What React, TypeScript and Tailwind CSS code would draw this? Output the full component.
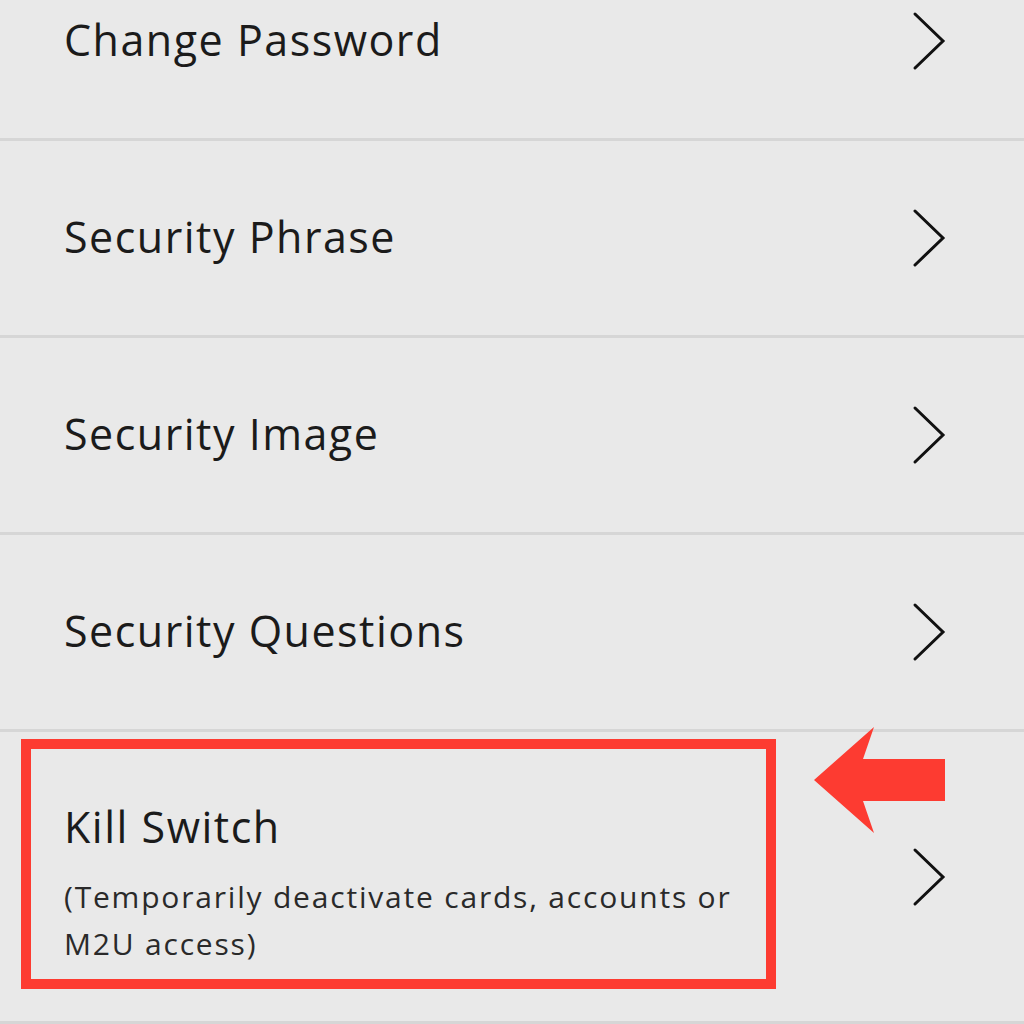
import React from "react";

const Chevron = () => (
  <svg width="34" height="60" viewBox="0 0 34 60" fill="none" className="shrink-0">
    <polyline
      points="3,3 31,30 3,57"
      stroke="#111111"
      strokeWidth="3"
      strokeLinecap="round"
      strokeLinejoin="miter"
    />
  </svg>
);

const Row = ({ title }: { title: string }) => (
  <div className="flex h-[197px] items-center justify-between border-b-[3px] border-[#d6d6d6] pl-[64px] pr-[78px]">
    <span className="-mt-[3px] text-[43px] leading-none tracking-[1.5px] text-[#1b1b1b]">{title}</span>
    <Chevron />
  </div>
);

const items = ["Change Password", "Security Phrase", "Security Image", "Security Questions"];

export default function App() {
  return (
    <div
      className="h-[1024px] w-[1024px] overflow-hidden bg-[#e9e9e9]"
      style={{ fontFamily: '"Open Sans", "Liberation Sans", sans-serif' }}
    >
      {/* list is scrolled a bit, first row is cut at the top */}
      <div className="-mt-[56px]">
        {items.map((t) => (
          <Row key={t} title={t} />
        ))}
        <div className="relative flex h-[292px] items-center justify-between border-b-[3px] border-[#d6d6d6] pl-[64px] pr-[78px]">
          <div className="mt-[14px] flex flex-col">
            <span className="text-[43px] leading-[52px] tracking-[1.5px] text-[#1b1b1b]">Kill Switch</span>
            <span className="mt-[20px] w-[690px] text-[30px] leading-[47px] tracking-[1.8px] text-[#2a2a2a]">
              (Temporarily deactivate cards, accounts or M2U access)
            </span>
          </div>
          <Chevron />
          {/* highlight box */}
          <div className="pointer-events-none absolute left-[21px] top-[7px] h-[250px] w-[755px] border-[10px] border-[#fd3b31]" />
          {/* pointer arrow */}
          <svg
            className="pointer-events-none absolute left-[812px] top-[-6px]"
            width="136"
            height="110"
            viewBox="0 0 136 110"
          >
            <polygon
              points="2,54 62,1 51,33 133,33 133,75 51,75 62,107"
              fill="#fd3b31"
            />
          </svg>
        </div>
      </div>
    </div>
  );
}
